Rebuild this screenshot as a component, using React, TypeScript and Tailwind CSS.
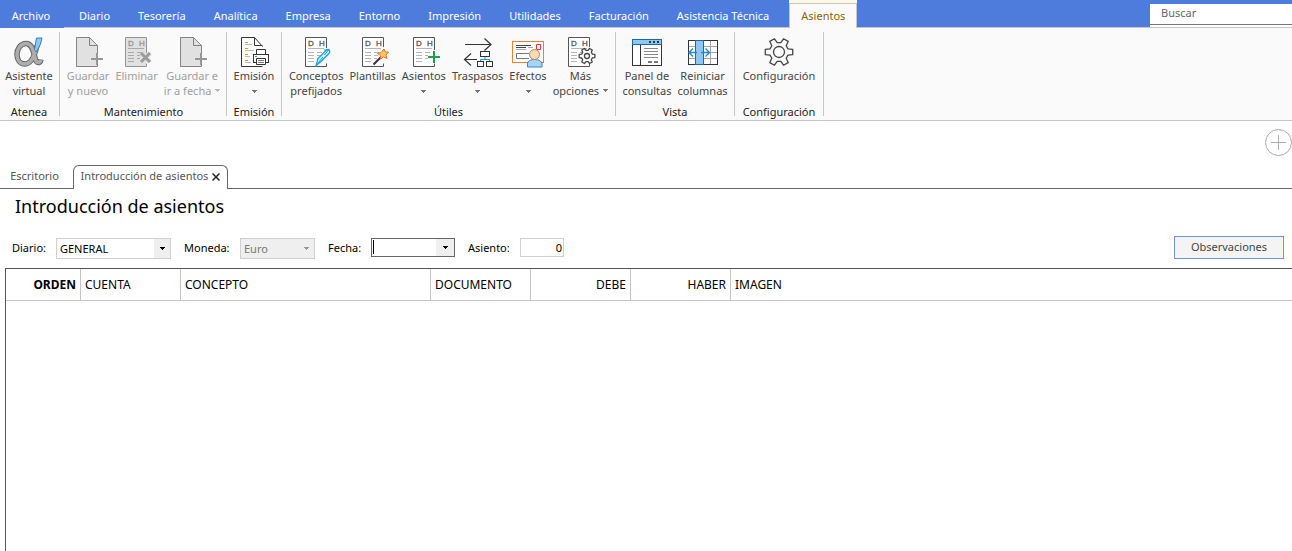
import React from "react";

const menuItems = [
  "Diario",
  "Tesorería",
  "Analítica",
  "Empresa",
  "Entorno",
  "Impresión",
  "Utilidades",
  "Facturación",
  "Asistencia Técnica",
];

const columns = [
  { title: "ORDEN", className: "w-[75px] text-right font-bold" },
  { title: "CUENTA", className: "w-[100px] text-left font-normal" },
  { title: "CONCEPTO", className: "w-[250px] text-left font-normal" },
  { title: "DOCUMENTO", className: "w-[100px] text-left font-normal" },
  { title: "DEBE", className: "w-[100px] text-right font-normal" },
  { title: "HABER", className: "w-[100px] text-right font-normal" },
  { title: "IMAGEN", className: "text-left font-normal" },
];

// Outline of a six-toothed wheel centred on 0,0
const gearPath = (outer: number, inner: number) => {
  const point = (radius: number, degrees: number) => {
    const angle = (degrees * Math.PI) / 180;
    return `${(radius * Math.cos(angle)).toFixed(2)} ${(radius * Math.sin(angle)).toFixed(2)}`;
  };
  const points = [0, 60, 120, 180, 240, 300].flatMap((a) => [
    point(inner, a - 19),
    point(outer, a - 11),
    point(outer, a + 11),
    point(inner, a + 19),
  ]);
  return `M${points.join("L")}Z`;
};

/* ---------- Icons ---------- */

const Icon = ({ children }: { children: React.ReactNode }) => (
  <svg width="32" height="32" viewBox="0 0 32 32" fill="none" aria-hidden="true" className="shrink-0">
    {children}
  </svg>
);

const Caret = ({ className = "" }: { className?: string }) => (
  <svg width="5" height="3" viewBox="0 0 5 3" fill="currentColor" aria-hidden="true" className={className}>
    <path d="M0 0h5v1H4v1H3v1H2V2H1V1H0z" />
  </svg>
);

// Sheet with the D / H (debe / haber) heading, shared by several icons
const Ledger = ({ stroke = "#555", fill = "#fff", line = "#b4b4b4", open = 10 }) => (
  <>
    <path d="M5 1h21v29H5z" fill={fill} />
    <path d={`M26.5 ${open}V1.5h-21v29H26.5v-3`} stroke={stroke} />
    <text x="8" y="10" fontSize="8" fill={stroke} stroke={stroke} strokeWidth="0.3" className="font-['Liberation_Sans']">
      D
    </text>
    <text x="19" y="10" fontSize="8" fill={stroke} stroke={stroke} strokeWidth="0.3" className="font-['Liberation_Sans']">
      H
    </text>
    <path d="M8 12.5h16" stroke={line} />
    <path d="M8 16.5h6M8 19.5h6M8 22.5h6M8 25.5h6M17 16.5h5M17 19.5h4M17 22.5h3" stroke={line} />
  </>
);

const alphaPath =
  "M24 9.500c-2 9-5 18.500-12 18.500-5 0-8-4-8-9.500S7.500 7.500 13 7.500c6.500 0 7.500 8.500 9 14.500.7 3 2 5 4 4.500 1.200-.3 1.700-1.500 2-3";

const AlphaIcon = () => (
  <Icon>
    <path d={alphaPath} stroke="#666" strokeWidth="5.500" />
    <path d={alphaPath} stroke="#adadad" strokeWidth="3.500" />
    <path d="M21.500 13.500l2-11.500h5.500l-1.500 6-4 8z" fill="#8ec9f2" stroke="#2f7fc1" />
  </Icon>
);

const NewDocIcon = () => (
  <Icon>
    <path d="M4.500 1.500h13l8 8v21h-21z" fill="#e1e1e1" />
    <path d="M25.500 18V9.500l-8-8h-13v29h21V28M17.500 1.500v8h8" stroke="#848484" />
    <path d="M25 17v12M19 23h12" stroke="#969696" strokeWidth="2" />
  </Icon>
);

const DeleteIcon = () => (
  <Icon>
    <g transform="translate(-1 0)">
      <Ledger stroke="#949494" fill="#e1e1e1" line="#a9a9a9" open={17} />
    </g>
    <path d="M20 17l9 9M29 17l-9 9" stroke="#e1e1e1" strokeWidth="5" />
    <path d="M20 17l9 9M29 17l-9 9" stroke="#9b9b9b" strokeWidth="3" />
  </Icon>
);

const PrintIcon = () => (
  <Icon>
    <path d="M3.500 1.500h13l8 8v21h-21z" fill="#fff" />
    <path d="M24.500 10.500l-8-9h-13v29h21M16.500 1.500v8h8" stroke="#333" />
    <path d="M7 6.500h3M7 12.500h3M7 18.500h3M7 24.500h3" stroke="#f39200" />
    <path d="M7 8.500h7M7 14.500h9M7 20.500h5M7 26.500h6" stroke="#b9b9b9" />
    <path d="M18.500 18v-4.500h9V18" fill="#fff" stroke="#333" />
    <rect x="15.500" y="18.500" width="15" height="8" fill="#fff" stroke="#333" />
    <path d="M18.500 22.500h9v6h-9z" fill="#fff" stroke="#333" />
    <path d="M20 24.500h6M20 26.500h6" stroke="#777" />
    <path d="M17 20.500h2" stroke="#1a9ad7" />
  </Icon>
);

const ConceptsIcon = () => (
  <Icon>
    <Ledger open={12} />
    <path d="M16 29.500l2-7 8-8c3-2.500 5 .5 3 3l-8 8z" fill="#d3effa" stroke="#149fda" strokeWidth="1.200" />
    <path d="M18 27l5-6M24 14h4.500l-4 5" stroke="#149fda" />
  </Icon>
);

const WandIcon = () => (
  <Icon>
    <Ledger open={11} />
    <path d="M16.500 28.500l8-8" stroke="#333" strokeWidth="2" />
    <path d="M27 13l1.500 3 3 0-2.500 3 1 3.500-3.500-1.500-3 2v-3.500l-3-2 3.500-1z" fill="#ffc65c" stroke="#e8702a" />
  </Icon>
);

const AddEntryIcon = () => (
  <Icon>
    <Ledger open={14} />
    <path d="M26 15v12M20 21h12" stroke="#fff" strokeWidth="4" />
    <path d="M26 15v12M20 21h12" stroke="#16a34a" strokeWidth="2" />
  </Icon>
);

const TransferIcon = () => (
  <Icon>
    <path d="M3 8.500h26M22.500 2.500l6.500 6-6.500 6M15 23.500H2.500M9 17.500l-6.500 6 6.500 6" stroke="#333" strokeWidth="1.200" />
    <rect x="18.500" y="15.500" width="9" height="5" fill="#fff" stroke="#333" />
    <path d="M23 21v2.500M18.500 25v-1.500h9V25" stroke="#2b94d6" />
    <rect x="15.500" y="25.500" width="6" height="5" fill="#fff" stroke="#333" />
    <rect x="24.500" y="25.500" width="6" height="5" fill="#fff" stroke="#333" />
  </Icon>
);

const EffectsIcon = () => (
  <Icon>
    <rect x="0.500" y="5.500" width="31" height="21" fill="#fdfdfd" stroke="#e8832a" />
    <path d="M4 9.500h15M4 11.500h10" stroke="#444" />
    <path d="M16 11.500h5M4 13.500h10" stroke="#aaa" />
    <path d="M17 22.500H4.500v-5H17" stroke="#777" />
    <path d="M24.500 8.500h4v5h-4z" stroke="#e53935" />
    <path d="M15.500 31v-3c0-3 3-4.500 7-4.500s7.500 1.500 7.500 4.500v3z" fill="#a9d3f4" stroke="#3b86c4" />
    <circle cx="22.500" cy="18.500" r="5" fill="#fbd9b5" stroke="#b98660" />
  </Icon>
);

const GearIcon = () => (
  <Icon>
    <g transform="translate(16 16)" stroke="#444" strokeWidth="1.300" strokeLinejoin="round">
      <path d={gearPath(14, 9.5)} />
      <circle r="5.500" />
    </g>
  </Icon>
);

const OptionsIcon = () => (
  <Icon>
    <g transform="translate(-1 0)">
      <Ledger open={11} />
    </g>
    <g transform="translate(23 20)" stroke="#444" strokeWidth="1.300" strokeLinejoin="round">
      <path d={gearPath(8, 5.7)} fill="#fafafa" />
      <circle r="2.500" />
    </g>
  </Icon>
);

const PanelIcon = () => (
  <Icon>
    <rect x="1.500" y="3.500" width="29" height="26" fill="#fff" stroke="#333" />
    <rect x="1.500" y="3.500" width="29" height="5" fill="#8fc7ef" stroke="#1769ae" />
    <path d="M18 6h2M22 6h2M26 6h2" stroke="#333" strokeWidth="2" />
    <path d="M9.500 9v20" stroke="#333" />
    <path d="M13 12.500h14M13 15.500h14M13 18.500h14M13 21.500h14" stroke="#888" />
    <path d="M17 26h4M23 26h4" stroke="#777" strokeWidth="2" />
  </Icon>
);

const ColumnsIcon = () => (
  <Icon>
    <rect x="1.500" y="4.500" width="29" height="24" fill="#fff" stroke="#333" />
    <path d="M2 10.500h28M2 16.500h28M2 22.500h28M23.500 5v23" stroke="#a3a3a3" />
    <rect x="8.500" y="4.500" width="8" height="24" fill="#8fc7ef" stroke="#1769ae" />
    <path d="M10 16.500H2.500M6 12.500l-4 4 4 4M14 16.500h8M18.500 12.500l4 4-4 4" stroke="#2189d1" strokeWidth="1.400" />
  </Icon>
);

/* ---------- Ribbon ---------- */

type RibbonButtonProps = {
  icon: React.ReactNode;
  lines: string[];
  caret?: "below" | "inline";
  disabled?: boolean;
};

const RibbonButton = ({ icon, lines, caret, disabled }: RibbonButtonProps) => (
  <button
    type="button"
    disabled={disabled}
    className="group flex shrink-0 flex-col items-center px-[3px] leading-[15px] whitespace-nowrap text-[#444] disabled:text-[#a0a0a0]"
  >
    {icon}
    {lines.map((line, i) => (
      <span key={line} className="flex items-center gap-1">
        {line}
        {caret === "inline" && i === lines.length - 1 && (
          <Caret className="text-[#777] group-disabled:text-[#b8b8b8]" />
        )}
      </span>
    ))}
    {caret === "below" && <Caret className="mt-[7px] text-[#777]" />}
  </button>
);

const RibbonGroup = ({ title, className, children }: { title: string; className: string; children: React.ReactNode }) => (
  <section className={`flex shrink-0 flex-col border-r border-[#c6c6c6] ${className}`}>
    <div className="flex h-[74px] shrink-0 items-start justify-center pt-1">{children}</div>
    <h2 className="text-center leading-3 text-[#222]">{title}</h2>
  </section>
);

const Ribbon = () => (
  <div className="border-b border-[#c6c6c6] bg-[#fafafa] pt-1 pb-1">
    <div className="flex h-[84px]">
      <RibbonGroup title="Atenea" className="w-[60px] pr-px">
        <RibbonButton icon={<AlphaIcon />} lines={["Asistente", "virtual"]} />
      </RibbonGroup>
      <RibbonGroup title="Mantenimiento" className="w-[167px] pl-px">
        <RibbonButton icon={<NewDocIcon />} lines={["Guardar", "y nuevo"]} disabled />
        <RibbonButton icon={<DeleteIcon />} lines={["Eliminar"]} disabled />
        <RibbonButton icon={<NewDocIcon />} lines={["Guardar e", "ir a fecha"]} caret="inline" disabled />
      </RibbonGroup>
      <RibbonGroup title="Emisión" className="w-[55px]">
        <RibbonButton icon={<PrintIcon />} lines={["Emisión"]} caret="below" />
      </RibbonGroup>
      <RibbonGroup title="Útiles" className="w-[334px]">
        <RibbonButton icon={<ConceptsIcon />} lines={["Conceptos", "prefijados"]} />
        <RibbonButton icon={<WandIcon />} lines={["Plantillas"]} />
        <RibbonButton icon={<AddEntryIcon />} lines={["Asientos"]} caret="below" />
        <RibbonButton icon={<TransferIcon />} lines={["Traspasos"]} caret="below" />
        <RibbonButton icon={<EffectsIcon />} lines={["Efectos"]} caret="below" />
        <RibbonButton icon={<OptionsIcon />} lines={["Más", "opciones"]} caret="inline" />
      </RibbonGroup>
      <RibbonGroup title="Vista" className="w-[119px]">
        <RibbonButton icon={<PanelIcon />} lines={["Panel de", "consultas"]} />
        <RibbonButton icon={<ColumnsIcon />} lines={["Reiniciar", "columnas"]} />
      </RibbonGroup>
      <RibbonGroup title="Configuración" className="w-[89px]">
        <RibbonButton icon={<GearIcon />} lines={["Configuración"]} />
      </RibbonGroup>
    </div>
  </div>
);

const MenuBar = () => (
  <nav className="flex h-7 bg-[#4e7cdd] text-white">
    <button type="button" className="w-16 shrink-0 pt-1 pr-0.5">
      Archivo
    </button>
    <div className="flex min-w-0 flex-1 border-b border-[#c6c6c6] pl-px">
      {menuItems.map((item) => (
        <button key={item} type="button" className="shrink-0 px-3.5 pt-1.5 whitespace-nowrap">
          {item}
        </button>
      ))}
      <button
        type="button"
        className="-mb-px ml-1.5 shrink-0 border-t-3 border-[#fdf8e4] bg-[#fafafa] text-[#8a6500]"
      >
        <span className="flex h-full items-center border-x border-t border-[#c6c6c6] px-[11px]">Asientos</span>
      </button>
      <div className="ml-auto w-[142px] shrink-0 pt-1">
        <div className="h-[23px] bg-white">
          <input
            type="text"
            aria-label="Buscar"
            placeholder="Buscar"
            className="block h-[21px] w-full border-b border-[#777] bg-white px-[11px] pb-1 outline-none placeholder:text-[#666]"
          />
        </div>
      </div>
    </div>
  </nav>
);

const DocumentTabs = () => (
  <div className="flex h-6 items-stretch text-[#555]">
    <button type="button" className="w-[73px] border-b border-[#666] pr-1">
      Escritorio
    </button>
    <div className="flex w-[155px] items-center justify-center gap-1 rounded-t-md border border-b-0 border-[#666] pb-0.5 whitespace-nowrap">
      <button type="button">Introducción de asientos</button>
      <button type="button" aria-label="Cerrar" className="text-[#222]">
        <svg width="8" height="8" viewBox="0 0 8 8" stroke="currentColor" strokeWidth="1.500" aria-hidden="true">
          <path d="M0.500 0.500l7 7M7.500 0.500l-7 7" />
        </svg>
      </button>
    </div>
    <div className="flex-1 border-b border-[#666]" />
  </div>
);

const EntryForm = () => (
  <form className="flex h-[22px] items-start pr-2 pl-3 text-black">
    <label htmlFor="diario" className="w-11 leading-5">
      Diario:
    </label>
    <div className="relative w-[115px]">
      <select id="diario" className="h-[21px] w-full appearance-none border border-[#d0d0d0] bg-white pt-px pl-[3px]">
        <option>GENERAL</option>
      </select>
      <span className="pointer-events-none absolute inset-y-px right-px flex w-4 items-center justify-center bg-[#efefef]">
        <Caret />
      </span>
    </div>
    <label htmlFor="moneda" className="ml-[13px] w-14 leading-5">
      Moneda:
    </label>
    <div className="relative w-[75px] text-[#777]">
      <select
        id="moneda"
        disabled
        className="h-[21px] w-full appearance-none border border-[#d0d0d0] bg-[#efefef] pt-px pl-[3px] opacity-100"
      >
        <option>Euro</option>
      </select>
      <span className="pointer-events-none absolute inset-y-px right-px flex w-4 items-center justify-center text-[#999]">
        <Caret />
      </span>
    </div>
    <label htmlFor="fecha" className="ml-[13px] w-[43px] leading-5">
      Fecha:
    </label>
    <div className="relative w-[84px]">
      <input id="fecha" type="text" className="block h-[19px] w-full border border-[#666] bg-white pl-1 outline-none" />
      <span className="pointer-events-none absolute top-0.5 left-0.5 h-[14px] w-px bg-black" />
      <span className="pointer-events-none absolute inset-y-px right-px flex w-[18px] items-center justify-center bg-[#efefef]">
        <Caret />
      </span>
    </div>
    <label htmlFor="asiento" className="ml-[13px] w-[52px] leading-5">
      Asiento:
    </label>
    <input
      id="asiento"
      type="text"
      defaultValue="0"
      className="h-[19px] w-11 border border-[#d0d0d0] bg-white pr-px text-right outline-none"
    />
    <button type="button" className="-mt-0.5 ml-auto h-[23px] w-[110px] border border-[#6f94e2] bg-[#f4f4f4] text-[#444]">
      Observaciones
    </button>
  </form>
);

const App = () => {
  return (
    <div className="flex min-h-screen flex-col overflow-hidden bg-white font-['Noto_Sans',sans-serif] text-[11px]">
      <header>
        <MenuBar />
        <Ribbon />
      </header>

      <div className="flex h-11 items-start justify-end pt-2">
        <button type="button" aria-label="Añadir" className="text-[#aaa]">
          <svg width="27" height="27" viewBox="0 0 27 27" fill="none" stroke="currentColor" aria-hidden="true">
            <circle cx="13.500" cy="13.500" r="13" />
            <path d="M6 13.500h15M13.500 6v15" />
          </svg>
        </button>
      </div>

      <DocumentTabs />

      <main className="flex flex-1 flex-col">
        <h1 className="px-[15px] pt-[3px] pb-[18px] text-lg leading-7 text-black">Introducción de asientos</h1>
        <EntryForm />

        {/* Entries grid */}
        <div className="mt-2 ml-[5px] flex-1 border-t border-l border-[#555]">
          <table className="w-full table-fixed border-separate border-spacing-0">
            <thead>
              <tr className="h-8 text-xs text-black">
                {columns.map((col) => (
                  <th key={col.title} className={`border-r border-b border-[#c6c6c6] px-1 last:border-r-0 ${col.className}`}>
                    {col.title}
                  </th>
                ))}
              </tr>
            </thead>
          </table>
        </div>
      </main>
    </div>
  );
};

export default App;
